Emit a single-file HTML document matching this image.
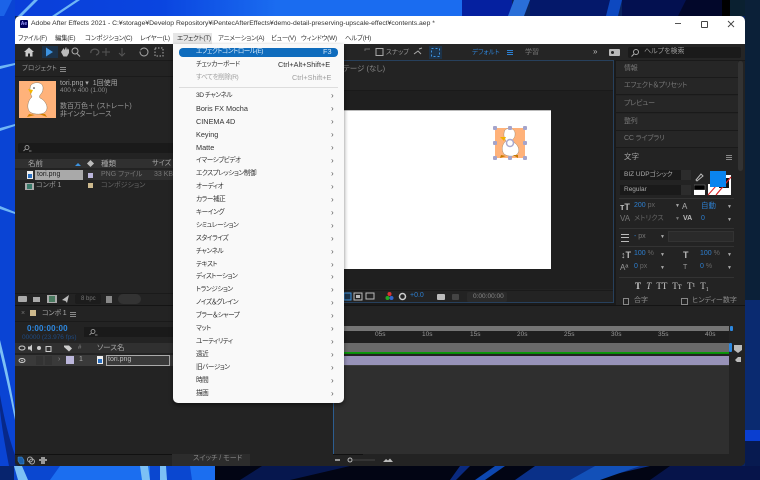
<!DOCTYPE html>
<html lang="ja"><head><meta charset="utf-8"><title>Adobe After Effects 2021</title>
<style>
html,body{margin:0;padding:0;width:760px;height:480px;overflow:hidden;background:#0a1f4d}
body{position:relative;font-family:"Liberation Sans","Noto Sans CJK JP",sans-serif;font-size:7px;color:#aaa;font-feature-settings:"palt" 1}
div,span.a,svg.a{position:absolute}
.t{position:absolute;white-space:nowrap;line-height:10px;height:10px}
.blue{color:#2d7fd0}
.dim{color:#666}
.wrap{position:absolute;left:0;top:0;width:760px;height:480px;filter:blur(.3px)}
.mb{top:34px;color:#333;font-size:6.4px;letter-spacing:-.2px}
.bg{width:6px;height:5px;background:repeating-linear-gradient(#888 0 1px,transparent 1px 2px)}
.menu .t{color:#333;font-size:6.6px;letter-spacing:-.45px;left:23px}
.menu .t.l{font-size:7.3px;letter-spacing:0}
.menu .t.ar{left:158px;color:#555;font-size:8px;letter-spacing:0}
.rp{left:616px;width:122px;height:16px;background:#262626;border-bottom:1px solid #1a1a1a}
.rp .t{left:8px;top:3px;color:#777;font-size:7px;letter-spacing:-.2px}
</style></head><body>
<div class="wrap">
<svg class="a" style="left:0;top:0" width="760" height="480" viewBox="0 0 760 480">
<defs><linearGradient id="g" x1="0" x2="1" y1="0" y2="0"><stop offset="0" stop-color="#0a3ed8"/><stop offset=".35" stop-color="#0a45e0"/><stop offset=".6" stop-color="#1a6cf0"/></linearGradient></defs>
<rect width="760" height="480" fill="#0a2460"/>
<rect width="462" height="16" fill="url(#g)"/>
<rect y="0" width="15" height="466" fill="#0a44d4"/>
<path d="M0 0H12L4 16H0Z" fill="#1b63e8"/>
<path d="M34 0H38L22 16H18ZM76 0H80L56 16H52Z" fill="#6fb6f5"/>
<rect x="462" width="50" height="16" fill="#0520a0"/><path d="M514 0H530L524 16H508Z" fill="#2a6fd8"/><rect x="530" width="80" height="16" fill="#04186a"/><path d="M610 0H622L618 16H606Z" fill="#0d48c0"/><rect x="622" width="64" height="16" fill="#031050"/><path d="M686 0H722V16H678Z" fill="#02072a"/>
<rect x="722" width="8" height="16" fill="#000"/><rect x="730" width="30" height="16" fill="#0a2030"/>
<path d="M745 0H760V300H745Z" fill="#0b2038"/><path d="M745 300H760V430H745Z" fill="#0a2a70"/><path d="M745 430H760V441H745Z" fill="#0a3ed0"/><path d="M745 441H760V466H745Z" fill="#071a50"/>
<path d="M0 66L15 63V65L0 69ZM0 128L15 124V126L0 131ZM0 206L15 212V214L0 209Z" fill="#6fb6f5"/>
<path d="M0 340Q10 380 15 412V420Q8 385 0 352Z" fill="#7cc0f5"/>
<path d="M0 395Q6 430 15 455V466H9Q2 430 0 410Z" fill="#07288a"/>
<rect y="466" width="760" height="14" fill="#020514"/>
<rect y="466" width="215" height="14" fill="#0a47d0"/>
<rect y="466" width="14" height="14" fill="#07246e"/>
<path d="M14 466H22L28 480H18Z" fill="#7cc0f5"/><path d="M60 466L150 466V480H50Z" fill="#1b6ef0"/><path d="M140 466H148L150 480H142ZM160 466H166L167 480H160Z" fill="#7cc0f5"/><path d="M190 466H215V480H192Z" fill="#1b6ef0"/>
<path d="M240 480L262 466H350L290 480Z" fill="#06174e"/><path d="M450 480L460 466H470L456 480Z" fill="#0a2a80"/><path d="M475 480L495 466H505L485 480Z" fill="#0d47b0"/>
<path d="M515 480L535 466H650L590 480Z" fill="#0a3088"/><path d="M570 480L595 466H640L600 480Z" fill="#1250b8"/><path d="M650 480L670 466H760V480Z" fill="#06144a"/>
</svg>

<!-- window -->
<div style="left:15px;top:16px;width:730px;height:450px;background:#1a1a1a;border-radius:5px;overflow:hidden">
 <div style="left:0;top:0;width:730px;height:29px;background:#fff"></div>
</div>
<div style="left:20px;top:20px;width:8px;height:8px;background:#00005b;border-radius:1px"></div>
<div class="t" style="left:20px;top:19px;width:8px;text-align:center;color:#9a9aff;font-size:5px;font-weight:bold">Ae</div>
<div class="t" style="left:31px;top:19px;color:#333;font-size:6.8px">Adobe After Effects 2021 - C:¥storage¥Develop Repository¥iPentecAfterEffects¥demo-detail-preserving-upscale-effect¥contents.aep *</div>
<div style="left:675px;top:23px;width:6px;height:1px;background:#555"></div>
<div style="left:701px;top:21px;width:5px;height:5px;border:1px solid #444;border-radius:1px"></div>
<svg class="a" style="left:727px;top:20px" width="8" height="8"><path d="M1 1L7 7M7 1L1 7" stroke="#444" stroke-width=".9"/></svg>

<!-- menubar -->
<div class="t mb" style="left:18px">ファイル(F)</div>
<div class="t mb" style="left:55px">編集(E)</div>
<div class="t mb" style="left:85px">コンポジション(C)</div>
<div class="t mb" style="left:140px">レイヤー(L)</div>
<div style="left:173px;top:33px;width:39px;height:11px;background:#e6e6e6"></div>
<div class="t mb" style="left:177px">エフェクト(T)</div>
<div class="t mb" style="left:218px">アニメーション(A)</div>
<div class="t mb" style="left:271px">ビュー(V)</div>
<div class="t mb" style="left:301px">ウィンドウ(W)</div>
<div class="t mb" style="left:345px">ヘルプ(H)</div>

<!-- toolbar -->
<div style="left:15px;top:44px;width:730px;height:16px;background:#252525"></div>
<svg class="a" style="left:15px;top:44px" width="160" height="16">
<path d="M9 8L14 3.5L19 8H17.5V12.5H15V9.5H13V12.5H10.5V8Z" fill="#ccc"/>
<rect x="27" y="2" width="16" height="12" fill="#1c3248"/>
<path d="M31 3.5V12.5L38 8Z" fill="#3d93e0"/>
<path d="M46 8L48 5V4L50 6V3L51.5 6V3L53 6L54 4.5V9L52 12.5H48.5Z" fill="#bbb"/>
<circle cx="60" cy="7" r="3" fill="none" stroke="#aaa"/><path d="M62 9.5L65 12.5" stroke="#aaa"/>
<path d="M76 9a4 3 0 1 1 5 2" stroke="#555" fill="none" stroke-width="1.3"/>
<path d="M91 4V12M87 8H95" stroke="#555"/><path d="M107 4V11M104 9L107 12L110 9" stroke="#555" fill="none"/>
<circle cx="129" cy="8" r="4" stroke="#aaa" fill="none"/><path d="M125 3V7H129" fill="none" stroke="#252525"/>
<rect x="140" y="4" width="8" height="8" fill="none" stroke="#aaa" stroke-dasharray="1.5 1.5"/>
</svg>
<svg class="a" style="left:344px;top:44px" width="120" height="16">
<path d="M21 7V5H26" stroke="#666" fill="none"/>
<rect x="32" y="4.500" width="7" height="7" fill="none" stroke="#aaa"/>
<path d="M70 10L74 7L77 10M75 5L78 4" stroke="#aaa" fill="none"/>
<rect x="85" y="2" width="13" height="13" fill="#1c3248"/><rect x="87.500" y="4.500" width="8" height="8" fill="none" stroke="#3d93e0" stroke-dasharray="2 2"/>
</svg>
<div class="t" style="left:386px;top:48px;color:#999;font-size:6.500px">スナップ</div>
<div class="t" style="left:472px;top:48px;color:#2d7fd0;font-size:6.500px">デフォルト</div>
<div style="left:507px;top:50px;width:6px;height:5px;background:repeating-linear-gradient(#2d7fd0 0 1px,transparent 1px 2px)"></div>
<div class="t" style="left:525px;top:48px;color:#777">学習</div>
<div class="t" style="left:593px;top:47px;color:#bbb;font-size:8px">»</div>
<div style="left:609px;top:49px;width:11px;height:7px;background:#bbb;border-radius:1px"></div>
<div style="left:611px;top:51px;width:3px;height:3px;background:#252525;border-radius:2px"></div>
<div style="left:628px;top:47px;width:113px;height:11px;background:#1a1a1a;border-radius:2px"></div>
<svg class="a" style="left:630px;top:48px" width="10" height="10"><circle cx="6" cy="4" r="2.500" fill="none" stroke="#aaa"/><path d="M4 6L1.500 8.500" stroke="#aaa"/></svg>
<div class="t" style="left:644px;top:47px;color:#999;font-size:7px">ヘルプを検索</div>

<!-- project panel -->
<div style="left:15px;top:61px;width:160px;height:244px;background:#232323"></div>
<div class="t" style="left:22px;top:64px;color:#999;font-size:6.500px">プロジェクト</div>
<div class="bg" style="left:60px;top:67px"></div>
<div style="left:15px;top:76px;width:160px;height:1px;background:#1a1a1a"></div>
<svg class="a" style="left:19px;top:81px" width="37" height="37" viewBox="0 0 37 37">
<rect width="37" height="37" fill="#ffb27a"/>
<path d="M12 4C16 0 25 1 24 8C24 13 19 14 21 17C26 19 30 26 27 30C25 34 15 34 11 31C7 27 9 19 13 16C11 12 10 8 12 4Z" fill="#fff" stroke="#8a7a60" stroke-width=".5"/>
<path d="M9 8L14 9L12 13Z" fill="#f5b700"/><path d="M10 33L16 34L8 36ZM20 33L26 33L28 36Z" fill="#d28000"/>
<circle cx="15" cy="7" r=".8" fill="#222"/>
</svg>
<div class="t" style="left:60px;top:79px;color:#aaa">tori.png ▾&nbsp; 1回使用</div>
<div class="t" style="left:60px;top:86px;color:#888;font-size:6.500px">400 x 400 (1.00)</div>
<div class="t" style="left:60px;top:102px;color:#999;font-size:7px">数百万色＋ (ストレート)</div>
<div class="t" style="left:60px;top:110px;color:#999;font-size:7px">非インターレース</div>

<div style="left:18px;top:143px;width:157px;height:10px;background:#1a1a1a;border-radius:2px"></div>
<svg class="a" style="left:22px;top:144px" width="10" height="9"><circle cx="5" cy="3.500" r="2" fill="none" stroke="#aaa" stroke-width=".8"/><path d="M3.500 5L1.500 7M7 7H9.500" stroke="#aaa" stroke-width=".8"/></svg>
<div style="left:15px;top:159px;width:160px;height:9px;background:#303030"></div>
<div class="t" style="left:28px;top:159px;color:#aaa;font-size:7.5px">名前</div>
<div style="left:75px;top:163px;width:0;height:0;border-left:3px solid transparent;border-right:3px solid transparent;border-bottom:3px solid #3d93e0"></div>
<div style="left:88px;top:161px;width:5px;height:5px;background:#bbb;transform:rotate(45deg)"></div>
<div class="t" style="left:101px;top:159px;color:#aaa;font-size:7.5px">種類</div>
<div class="t" style="left:152px;top:159px;color:#aaa;font-size:7px">サイズ</div>
<div style="left:15px;top:170px;width:160px;height:10px;background:#2f2f2f"></div>
<div style="left:27px;top:171px;width:6px;height:8px;background:#eee"></div><div style="left:28px;top:174px;width:4px;height:4px;background:#2a6fc0"></div>
<div style="left:35px;top:170px;width:48px;height:10px;background:#a9a9a9"></div>
<div class="t" style="left:37px;top:170px;color:#222">tori.png</div>
<div style="left:88px;top:173px;width:5px;height:5px;background:#bcb7dc"></div>
<div class="t" style="left:101px;top:170px;color:#777">PNG ファイル</div>
<div class="t" style="left:154px;top:170px;color:#777">33 KB</div>
<div style="left:25px;top:183px;width:9px;height:7px;background:#aaa"></div><div style="left:27px;top:184px;width:5px;height:5px;background:#3a7a6a"></div>
<div class="t" style="left:36px;top:181px;color:#999">コンポ 1</div>
<div style="left:88px;top:183px;width:5px;height:5px;background:#cdb98d"></div>
<div class="t" style="left:101px;top:181px;color:#666">コンポジション</div>
<div style="left:15px;top:293px;width:160px;height:1px;background:#1a1a1a"></div>
<div style="left:18px;top:296px;width:9px;height:6px;background:#aaa;border-radius:1px"></div>
<div style="left:33px;top:297px;width:7px;height:5px;background:#aaa"></div>
<div style="left:47px;top:295px;width:10px;height:8px;background:#aaa"></div><div style="left:49px;top:296px;width:6px;height:6px;background:#4a7a60"></div>
<svg class="a" style="left:62px;top:295px" width="8" height="8"><path d="M0 5L7 0L5 8L3.500 6Z" fill="#bbb"/></svg>
<div style="left:75px;top:294px;width:26px;height:10px;background:#1c1c1c;border-radius:2px"></div>
<div class="t" style="left:81px;top:294px;color:#777;font-size:6px">8 bpc</div>
<div style="left:106px;top:296px;width:6px;height:7px;background:#888"></div>
<div style="left:118px;top:294px;width:23px;height:10px;background:#333;border-radius:5px"></div>

<!-- viewer -->
<div style="left:175px;top:60px;width:439px;height:243px;background:#232323;border:1px solid #27405c;box-sizing:border-box"></div>
<div class="t" style="left:343px;top:64px;color:#888;font-size:7.5px">テージ (なし)</div>
<div style="left:176px;top:90px;width:437px;height:1px;background:#1a1a1a"></div>
<div style="left:176px;top:91px;width:437px;height:198px;background:#1f1f1f"></div>
<div style="left:176px;top:110px;width:375px;height:159px;background:#fff"></div>
<div style="left:176px;top:110px;width:375px;height:1px;background:#bbb"></div>
<svg class="a" style="left:490px;top:123px" width="40" height="40" viewBox="0 0 40 40">
<rect x="5" y="5" width="30" height="30" fill="#ffb27a"/>
<path d="M15 7C18 4 26 5 25 12C25 16 21 16 23 19C28 21 30 27 28 30C26 34 18 34 14 31C11 27 12 21 16 18C14 15 13 11 15 7Z" fill="#fff" stroke="#8a7a60" stroke-width=".4"/>
<path d="M10 14L16 14L14 18Z" fill="#f0b000"/><path d="M11 32L16 33L10 35ZM23 32L28 32L28 35Z" fill="#c47a00"/>
<circle cx="20" cy="20" r="3.500" fill="none" stroke="#a9a9cf" stroke-width="1.500"/>
<g fill="#a4a4cb"><rect x="3" y="3" width="4" height="4" rx="1"/><rect x="18" y="3" width="4" height="4" rx="1"/><rect x="33" y="3" width="4" height="4" rx="1"/><rect x="3" y="18" width="4" height="4" rx="1"/><rect x="33" y="18" width="4" height="4" rx="1"/><rect x="3" y="33" width="4" height="4" rx="1"/><rect x="18" y="33" width="4" height="4" rx="1"/><rect x="33" y="33" width="4" height="4" rx="1"/></g>
</svg>
<div style="left:176px;top:290px;width:437px;height:1px;background:#1a1a1a"></div>
<svg class="a" style="left:340px;top:290px" width="140" height="13">
<rect x="4" y="3" width="7" height="7" fill="#1c3248" stroke="#3d93e0"/>
<rect x="14" y="3" width="8" height="7" fill="none" stroke="#bbb"/><rect x="16" y="5" width="4" height="3" fill="#bbb"/>
<rect x="26" y="3" width="8" height="6" fill="none" stroke="#bbb"/>
<circle cx="49.500" cy="4" r="2" fill="#d33"/><circle cx="47.500" cy="8" r="2" fill="#2a2"/><circle cx="51.500" cy="8" r="2" fill="#36c"/>
<circle cx="62.500" cy="6.500" r="3" fill="none" stroke="#ccc" stroke-width="1.500"/>
<rect x="97" y="4" width="8" height="6" rx="1" fill="#bbb"/>
<rect x="112" y="4" width="7" height="6" rx="1" fill="#444"/>
</svg>
<div class="t" style="left:410px;top:291px;color:#2d7fd0">+0.0</div>
<div style="left:467px;top:292px;width:40px;height:10px;background:#2a2a2a;border-radius:2px"></div>
<div class="t" style="left:473px;top:292px;color:#888;font-size:6.500px">0:00:00:00</div>

<!-- right panels -->
<div style="left:616px;top:61px;width:129px;height:244px;background:#232323"></div>
<div class="rp" style="top:61px"><div class="t">情報</div></div>
<div class="rp" style="top:78px"><div class="t">エフェクト＆プリセット</div></div>
<div class="rp" style="top:96px"><div class="t">プレビュー</div></div>
<div class="rp" style="top:114px"><div class="t">整列</div></div>
<div class="rp" style="top:131px"><div class="t">CC ライブラリ</div></div>
<div style="left:738px;top:61px;width:5px;height:110px;background:#333;border-radius:3px"></div>
<div class="t" style="left:624px;top:152px;color:#aaa;font-size:7.5px">文字</div>
<div class="bg" style="left:726px;top:155px"></div>
<div style="left:620px;top:170px;width:61px;height:10px;background:#1a1a1a"></div>
<div class="t" style="left:624px;top:170px;color:#aaa;font-size:6.500px">BIZ UDPゴシック</div>
<div style="left:681px;top:170px;width:10px;height:10px;background:#2c2c2c"></div>
<div style="left:620px;top:185px;width:61px;height:10px;background:#1a1a1a"></div>
<div class="t" style="left:624px;top:185px;color:#aaa;font-size:6.500px">Regular</div>
<div style="left:681px;top:185px;width:10px;height:10px;background:#2c2c2c"></div>
<svg class="a" style="left:694px;top:170px" width="42" height="26">
<path d="M2 10L7 4L9 6L3 11Z" fill="none" stroke="#bbb"/>
<rect x="0" y="15" width="11" height="5" fill="#000" stroke="#888" stroke-width=".5"/><rect x="0" y="20" width="11" height="5" fill="#fff"/>
<rect x="14" y="14" width="8" height="11" fill="#fff"/><path d="M14 25L22 16" stroke="#d22"/>
<rect x="22" y="5" width="15" height="20" fill="#fff"/><rect x="25" y="8" width="10" height="10" fill="#111"/><path d="M22 25L37 7" stroke="#d22" stroke-width="1.200"/>
<rect x="16" y="1" width="16" height="16" fill="#0a84ee"/>
</svg>
<div style="left:619px;top:198px;width:115px;height:1px;background:#333"></div>
<div class="t" style="left:620px;top:202px;color:#bbb;font-size:9px;font-weight:bold">тT</div>
<div class="t blue" style="left:634px;top:201px">200 <span style="color:#666">px</span></div>
<div class="t" style="left:675px;top:201px;color:#aaa;font-size:5px">▼</div>
<div class="t" style="left:682px;top:202px;color:#aaa;font-size:8px">A</div>
<div class="t blue" style="left:701px;top:201px;font-size:7.5px">自動</div>
<div class="t" style="left:727px;top:202px;color:#aaa;font-size:5px">▼</div>
<div class="t" style="left:620px;top:214px;color:#777;font-size:8px">VA</div>
<div class="t dim" style="left:634px;top:214px">メトリクス</div>
<div class="t" style="left:675px;top:214px;color:#777;font-size:5px">▼</div>
<div class="t" style="left:683px;top:214px;color:#bbb;font-size:7px;font-weight:bold">VA</div>
<div class="t blue" style="left:701px;top:214px">0</div>
<div class="t" style="left:727px;top:215px;color:#aaa;font-size:5px">▼</div>
<div style="left:619px;top:228px;width:115px;height:1px;background:#333"></div>
<div style="left:621px;top:234px;width:8px;height:6px;border-top:1px solid #bbb;border-bottom:1px solid #bbb"></div><div style="left:621px;top:237px;width:8px;height:1px;background:#bbb"></div>
<div class="t" style="left:634px;top:232px;color:#777"><span class="blue">-</span> px</div>
<div class="t" style="left:660px;top:232px;color:#aaa;font-size:5px">▼</div>
<div style="left:668px;top:231px;width:66px;height:11px;background:#2a2a2a;border:1px solid #333;box-sizing:border-box"></div>
<div style="left:619px;top:246px;width:115px;height:1px;background:#333"></div>
<div class="t" style="left:621px;top:250px;color:#bbb;font-size:9px;font-weight:bold">↕T</div>
<div class="t blue" style="left:634px;top:249px">100 <span style="color:#666">%</span></div>
<div class="t" style="left:660px;top:250px;color:#aaa;font-size:5px">▼</div>
<div class="t" style="left:683px;top:250px;color:#bbb;font-size:9px;font-weight:bold">T</div>
<div class="t blue" style="left:700px;top:249px">100 <span style="color:#666">%</span></div>
<div class="t" style="left:727px;top:250px;color:#aaa;font-size:5px">▼</div>
<div class="t" style="left:620px;top:263px;color:#999;font-size:8px">Aª</div>
<div class="t blue" style="left:634px;top:262px">0 <span style="color:#666">px</span></div>
<div class="t" style="left:660px;top:263px;color:#aaa;font-size:5px">▼</div>
<div class="t" style="left:683px;top:263px;color:#999;font-size:7px">T</div>
<div class="t blue" style="left:700px;top:262px">0 <span style="color:#666">%</span></div>
<div class="t" style="left:727px;top:263px;color:#aaa;font-size:5px">▼</div>
<div style="left:619px;top:277px;width:115px;height:1px;background:#333"></div>
<div class="t" style="left:635px;top:281px;color:#ccc;font-size:9px;font-family:'Liberation Serif',serif;word-spacing:3px"><b>T</b> <i>T</i> TT Tт T¹ T₁</div>
<div style="left:623px;top:298px;width:6px;height:7px;border:1px solid #888;box-sizing:border-box"></div>
<div class="t" style="left:634px;top:296px;color:#888">合字</div>
<div style="left:681px;top:298px;width:7px;height:7px;border:1px solid #888;box-sizing:border-box"></div>
<div class="t" style="left:692px;top:296px;color:#888">ヒンディー数字</div>

<!-- timeline -->
<div style="left:15px;top:306px;width:730px;height:160px;background:#232323;border-radius:0 0 5px 5px"></div>
<div style="left:15px;top:305px;width:730px;height:1px;background:#141414"></div>
<div class="t" style="left:21px;top:309px;color:#777;font-size:7px">×</div>
<div style="left:30px;top:310px;width:6px;height:6px;background:#cdb98d"></div>
<div class="t" style="left:42px;top:309px;color:#aaa;font-size:7px;letter-spacing:-.2px">コンポ 1</div>
<div class="bg" style="left:70px;top:312px"></div>
<div style="left:15px;top:321px;width:159px;height:1px;background:#1a1a1a"></div>
<div class="t" style="left:27px;top:324px;color:#2d88e0;font-size:8px;font-weight:bold;letter-spacing:.02em">0:00:00:00</div>
<div class="t" style="left:22px;top:333px;color:#1f4a80;font-size:6.500px">00000 (23.976 fps)</div>
<div style="left:84px;top:327px;width:90px;height:10px;background:#1a1a1a"></div>
<svg class="a" style="left:88px;top:328px" width="10" height="9"><circle cx="5" cy="3.500" r="2" fill="none" stroke="#aaa" stroke-width=".8"/><path d="M3.500 5L1.500 7M7 7H9.500" stroke="#aaa" stroke-width=".8"/></svg>
<div style="left:15px;top:343px;width:159px;height:10px;background:#303030"></div>
<svg class="a" style="left:15px;top:343px" width="80" height="10">
<ellipse cx="7" cy="5" rx="3" ry="2" fill="none" stroke="#ccc"/><path d="M13 3.500H15L17 1.500V8.500L15 6.500H13Z" fill="#ccc"/><circle cx="24" cy="5" r="2" fill="#ccc"/><rect x="31" y="3.500" width="5" height="5" fill="none" stroke="#ccc"/><path d="M49 2.500L54 2.500L57 5.500L54 8.500L49 4Z" fill="#ccc"/>
</svg>
<div class="t" style="left:78px;top:343px;color:#888;font-size:6px">#</div>
<div class="t" style="left:97px;top:343px;color:#aaa;font-size:7.5px">ソース名</div>
<div style="left:15px;top:355px;width:159px;height:11px;background:#3a3a3a"></div>
<svg class="a" style="left:15px;top:355px" width="20" height="11"><ellipse cx="7" cy="5.500" rx="3" ry="2" fill="none" stroke="#ccc"/><circle cx="7" cy="5.500" r=".8" fill="#ccc"/></svg>
<div style="left:36px;top:356px;width:7px;height:9px;background:#333"></div>
<div style="left:45px;top:356px;width:7px;height:9px;background:#333"></div>
<div class="t" style="left:58px;top:355px;color:#888;font-size:7px">›</div>
<div style="left:66px;top:356px;width:8px;height:8px;background:#bcb7dc"></div>
<div class="t" style="left:79px;top:355px;color:#aaa">1</div>
<div style="left:97px;top:356px;width:6px;height:8px;background:#eee"></div><div style="left:98px;top:359px;width:4px;height:4px;background:#2a6fc0"></div>
<div style="left:106px;top:355px;width:64px;height:11px;background:#3a3a3a;border:1px solid #aaa;box-sizing:border-box"></div>
<div class="t" style="left:108px;top:355px;color:#bbb">tori.png</div>
<div style="left:15px;top:454px;width:159px;height:1px;background:#111"></div>
<svg class="a" style="left:17px;top:456px" width="32" height="9">
<path d="M1 1H5L7 4V8H3L1 5Z" fill="#1c5fa8" stroke="#3d93e0" stroke-width=".5"/>
<circle cx="13" cy="3.500" r="2.500" fill="none" stroke="#aaa"/><circle cx="15" cy="5.500" r="2.500" fill="none" stroke="#aaa"/>
<path d="M24 1H28V3H30V5H28V8H24V5H22V3H24Z" fill="#999"/>
</svg>
<div style="left:172px;top:454px;width:78px;height:12px;background:#2c2c2c"></div>
<div class="t" style="left:193px;top:454px;color:#888;font-size:7px">スイッチ / モード</div>

<!-- timeline right -->
<div style="left:333px;top:322px;width:412px;height:144px;background:#232323;border-radius:0 0 5px 0"></div>
<div style="left:344px;top:326px;width:385px;height:5px;background:#757575"></div>
<div style="left:730px;top:326px;width:3px;height:5px;background:#2d88e0;border-radius:1px"></div>
<div style="left:333px;top:331px;width:396px;height:12px;background:#1f1f1f"></div>
<div class="t" style="left:375px;top:330px;color:#999;font-size:6.500px">05s</div>
<div class="t" style="left:422px;top:330px;color:#999;font-size:6.500px">10s</div>
<div class="t" style="left:470px;top:330px;color:#999;font-size:6.500px">15s</div>
<div class="t" style="left:517px;top:330px;color:#999;font-size:6.500px">20s</div>
<div class="t" style="left:564px;top:330px;color:#999;font-size:6.500px">25s</div>
<div class="t" style="left:611px;top:330px;color:#999;font-size:6.500px">30s</div>
<div class="t" style="left:658px;top:330px;color:#999;font-size:6.500px">35s</div>
<div class="t" style="left:705px;top:330px;color:#999;font-size:6.500px">40s</div>
<div style="left:344px;top:343px;width:385px;height:9px;background:#6a6a6a"></div>
<div style="left:344px;top:352px;width:385px;height:1px;background:#0a9a0a"></div>
<div style="left:344px;top:353px;width:385px;height:3px;background:#222"></div>
<div style="left:344px;top:353px;width:385px;height:1px;background:#0a8a0a"></div>
<div style="left:344px;top:356px;width:385px;height:9px;background:#9792b8"></div>
<div style="left:333px;top:365px;width:396px;height:89px;background:#2f2f2f"></div>
<div style="left:344px;top:365px;width:385px;height:1px;background:#3d3d3d"></div>
<div style="left:729px;top:343px;width:3px;height:9px;background:#2d88e0;border-radius:1px"></div>
<svg class="a" style="left:733px;top:343px" width="10" height="24"><path d="M1 2H9V7L5 10L1 7Z" fill="#bbb"/><path d="M2 17L5 14H8V19H4Z" fill="#bbb"/></svg>
<div style="left:333px;top:403px;width:1px;height:51px;background:#2c5d90"></div>
<div style="left:333px;top:454px;width:392px;height:12px;background:#232323"></div>
<div style="left:333px;top:454px;width:30px;height:1px;background:#111"></div>
<svg class="a" style="left:333px;top:454px" width="100" height="12">
<path d="M2 6H7" stroke="#bbb" stroke-width="1.500"/><circle cx="17" cy="6" r="2" fill="none" stroke="#bbb"/><path d="M20 6H42" stroke="#444"/><path d="M50 8L53 5L55 6.500L57 4.500L60 8Z" fill="#bbb"/>
</svg>

<!-- effect menu -->
<div class="menu" style="left:173px;top:44px;width:171px;height:359px;background:#f9f9f9;border-radius:0 0 5px 5px;box-shadow:0 2px 4px rgba(0,0,0,.5)">
<div style="left:6px;top:4px;width:159px;height:9px;background:#0f6cbd;border-radius:4px"></div>
<div class="t" style="top:3px;color:#d5e8f8">エフェクトコントロール(E)</div><div class="t l" style="left:150px;top:3px;color:#d5e8f8">F3</div>
<div class="t" style="top:16px">チェッカーボード</div><div class="t l" style="left:105px;top:16px;color:#333">Ctrl+Alt+Shift+E</div>
<div class="t" style="top:29px;color:#a0a0a0">すべてを削除(R)</div><div class="t l" style="left:119px;top:29px;color:#a0a0a0">Ctrl+Shift+E</div>
<div style="left:6px;top:43px;width:159px;height:1px;background:#ddd"></div>
<div class="t" style="top:47px">3D チャンネル</div><div class="t ar" style="top:47px">›</div>
<div class="t l" style="top:60px">Boris FX Mocha</div><div class="t ar" style="top:60px">›</div>
<div class="t l" style="top:73px">CINEMA 4D</div><div class="t ar" style="top:73px">›</div>
<div class="t l" style="top:86px">Keying</div><div class="t ar" style="top:86px">›</div>
<div class="t l" style="top:99px">Matte</div><div class="t ar" style="top:99px">›</div>
<div class="t" style="top:112px">イマーシブビデオ</div><div class="t ar" style="top:112px">›</div>
<div class="t" style="top:125px">エクスプレッション制御</div><div class="t ar" style="top:125px">›</div>
<div class="t" style="top:138px">オーディオ</div><div class="t ar" style="top:138px">›</div>
<div class="t" style="top:151px">カラー補正</div><div class="t ar" style="top:151px">›</div>
<div class="t" style="top:164px">キーイング</div><div class="t ar" style="top:164px">›</div>
<div class="t" style="top:177px">シミュレーション</div><div class="t ar" style="top:177px">›</div>
<div class="t" style="top:190px">スタイライズ</div><div class="t ar" style="top:190px">›</div>
<div class="t" style="top:203px">チャンネル</div><div class="t ar" style="top:203px">›</div>
<div class="t" style="top:216px">テキスト</div><div class="t ar" style="top:216px">›</div>
<div class="t" style="top:228px">ディストーション</div><div class="t ar" style="top:228px">›</div>
<div class="t" style="top:241px">トランジション</div><div class="t ar" style="top:241px">›</div>
<div class="t" style="top:254px">ノイズ＆グレイン</div><div class="t ar" style="top:254px">›</div>
<div class="t" style="top:267px">ブラー＆シャープ</div><div class="t ar" style="top:267px">›</div>
<div class="t" style="top:280px">マット</div><div class="t ar" style="top:280px">›</div>
<div class="t" style="top:293px">ユーティリティ</div><div class="t ar" style="top:293px">›</div>
<div class="t" style="top:306px">遠近</div><div class="t ar" style="top:306px">›</div>
<div class="t" style="top:319px">旧バージョン</div><div class="t ar" style="top:319px">›</div>
<div class="t" style="top:332px">時間</div><div class="t ar" style="top:332px">›</div>
<div class="t" style="top:345px">描画</div><div class="t ar" style="top:345px">›</div>
</div>
</div>
</body></html>
